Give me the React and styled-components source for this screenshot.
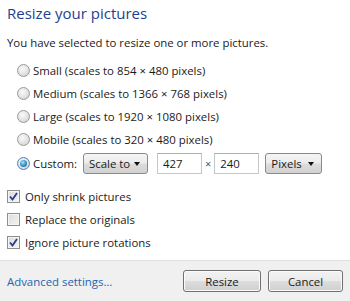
import React from "react";
import styled, { createGlobalStyle } from "styled-components";

const Global = createGlobalStyle`
  html, body { margin: 0; padding: 0; background: #fff; }
  body { font-family: "Open Sans", "Noto Sans", sans-serif; }
  * { box-sizing: border-box; }
`;

const Page = styled.div`
  width: 350px;
  height: 301px;
  display: flex;
  flex-direction: column;
  background: #fff;
  color: #1a1a1a;
  font-size: 11.4px;
`;

const Main = styled.div`
  flex: 1;
  padding: 3px 7px 0;
  display: flex;
  flex-direction: column;
`;

const Title = styled.div`
  font-size: 15px;
  line-height: 20px;
  color: #1e3f91;
`;

const Subtitle = styled.div`
  margin-top: 12px;
  line-height: 16px;
`;

const RadioList = styled.div`
  margin-top: 8px;
  padding-left: 10px;
  display: flex;
  flex-direction: column;
`;

const Row = styled.label`
  height: ${(p) => p.$h || 23}px;
  display: flex;
  align-items: center;
  gap: ${(p) => p.$gap || 3}px;
  white-space: nowrap;
`;

const Radio = styled.span`
  width: 13px;
  height: 13px;
  border-radius: 50%;
  border: 1px solid ${(p) => (p.$checked ? "#4c7fb0" : "#9a9a9a")};
  background: radial-gradient(circle at 40% 35%, #fafafa 0%, #e2e2e2 55%, #c9c9c9 100%);
  display: inline-flex;
  align-items: center;
  justify-content: center;
  flex: none;
  &::after {
    content: "";
    display: ${(p) => (p.$checked ? "block" : "none")};
    width: 7px;
    height: 7px;
    border-radius: 50%;
    background: radial-gradient(circle at 40% 35%, #b6e4f7 0%, #3b9bd0 45%, #1a5a8e 100%);
  }
`;

const Select = styled.div`
  height: 21px;
  width: ${(p) => p.$w}px;
  margin-left: ${(p) => p.$ml || 0}px;
  border: 1px solid #8a8a8a;
  border-radius: 3px;
  background: linear-gradient(#f4f4f4 0%, #ececec 48%, #dcdcdc 52%, #d2d2d2 100%);
  display: flex;
  align-items: center;
  justify-content: space-between;
  padding: 0 7px 0 5px;
  flex: none;
`;

const Arrow = styled.span`
  width: 0;
  height: 0;
  border-left: 3.5px solid transparent;
  border-right: 3.5px solid transparent;
  border-top: 4px solid #111;
`;

const Input = styled.div`
  height: 21px;
  width: 45px;
  margin-left: ${(p) => p.$ml || 0}px;
  border: 1px solid #c4c7cc;
  border-top-color: #abadb3;
  background: #fff;
  display: flex;
  align-items: center;
  padding-left: 5px;
  flex: none;
`;

const Times = styled.span`
  color: #555;
  font-size: 11px;
`;

const CheckList = styled.div`
  margin-top: 9px;
  display: flex;
  flex-direction: column;
`;

const Check = styled.span`
  width: 13px;
  height: 13px;
  border: 1px solid #8e8f8f;
  background: linear-gradient(135deg, #dcdcdc 0%, #f4f4f4 100%);
  box-shadow: inset 0 0 0 1px #f4f4f4;
  display: inline-flex;
  align-items: center;
  justify-content: center;
  flex: none;
`;

const Footer = styled.div`
  height: 41px;
  border-top: 1px solid #dfdfdf;
  background: #f0f0f0;
  display: flex;
  align-items: center;
  justify-content: space-between;
  padding: 0 7px;
`;

const Link = styled.a`
  color: #2563b0;
  text-decoration: none;
`;

const Buttons = styled.div`
  display: flex;
  gap: 7px;
`;

const Button = styled.button`
  width: ${(p) => p.$w}px;
  height: 22px;
  border: 1px solid #707070;
  border-radius: 3px;
  background: linear-gradient(#f2f2f2 0%, #ebebeb 48%, #dddddd 52%, #cfcfcf 100%);
  box-shadow: inset 0 0 0 1px #fbfbfb;
  font: inherit;
  color: #1a1a1a;
  padding: 0;
`;

const CheckMark = () => (
  <svg width="9" height="9" viewBox="0 0 9 9">
    <path d="M1 4.5 L3.5 7.5 L8 1" fill="none" stroke="#2a3a8c" strokeWidth="1.8" />
  </svg>
);

const options = [
  "Small (scales to 854 × 480 pixels)",
  "Medium (scales to 1366 × 768 pixels)",
  "Large (scales to 1920 × 1080 pixels)",
  "Mobile (scales to 320 × 480 pixels)",
];

const checks = [
  ["Only shrink pictures", true],
  ["Replace the originals", false],
  ["Ignore picture rotations", true],
];

export default function App() {
  return (
    <Page>
      <Global />
      <Main>
        <Title>Resize your pictures</Title>
        <Subtitle>You have selected to resize one or more pictures.</Subtitle>
        <RadioList>
          {options.map((o) => (
            <Row key={o}>
              <Radio />
              <span>{o}</span>
            </Row>
          ))}
          <Row $h={25}>
            <Radio $checked />
            <span>Custom:</span>
            <Select $w={65} $ml={3}>
              <span>Scale to</span>
              <Arrow />
            </Select>
            <Input $ml={6}>427</Input>
            <Times>×</Times>
            <Input>240</Input>
            <Select $w={57} $ml={3}>
              <span>Pixels</span>
              <Arrow />
            </Select>
          </Row>
        </RadioList>
        <CheckList>
          {checks.map(([t, c]) => (
            <Row key={t} $gap={5}>
              <Check>{c && <CheckMark />}</Check>
              <span>{t}</span>
            </Row>
          ))}
        </CheckList>
      </Main>
      <Footer>
        <Link href="#">Advanced settings...</Link>
        <Buttons>
          <Button $w={78}>Resize</Button>
          <Button $w={75}>Cancel</Button>
        </Buttons>
      </Footer>
    </Page>
  );
}
